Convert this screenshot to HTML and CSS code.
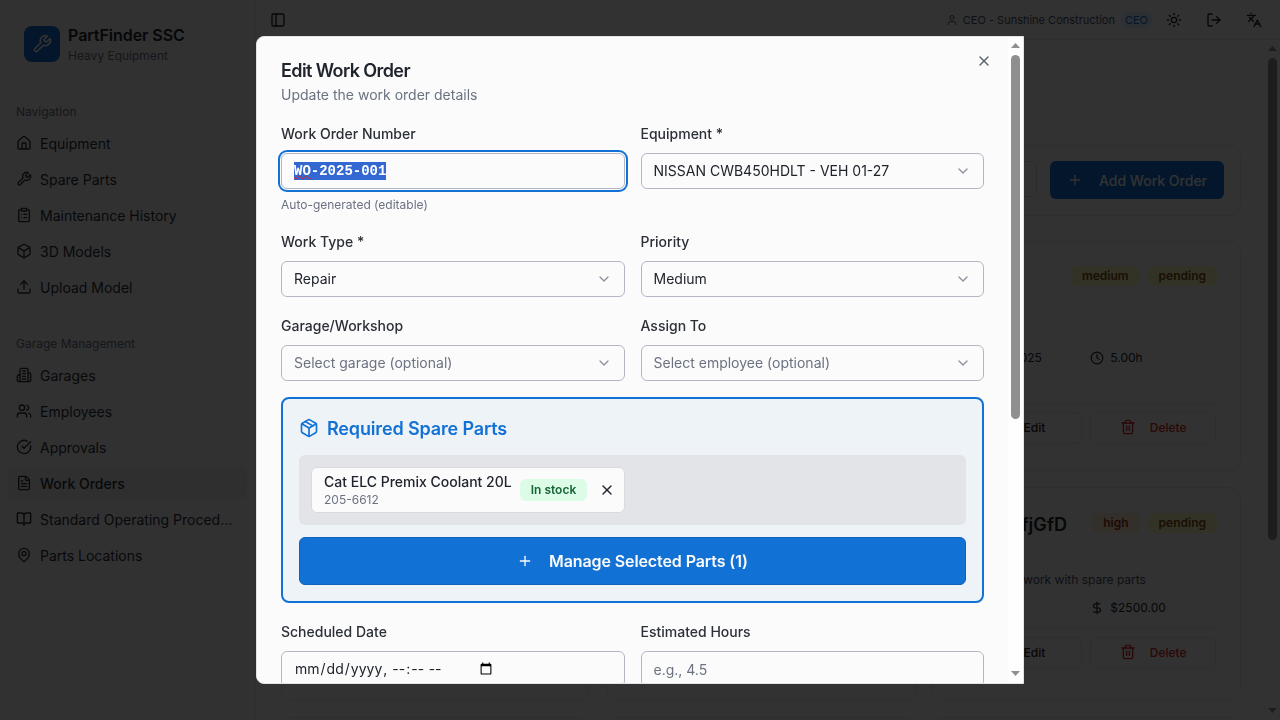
FILE: index.html
```html
<!DOCTYPE html>
<html lang="en">
<head>
<meta charset="utf-8">
<title>PartFinder SSC - Work Orders</title>
<link rel="stylesheet" href="styles.css">
</head>
<body>
<svg class="sprite" xmlns="http://www.w3.org/2000/svg">
  <symbol id="i-wrench" viewBox="0 0 24 24"><path d="M14.7 6.3a1 1 0 0 0 0 1.4l1.6 1.6a1 1 0 0 0 1.4 0l3.77-3.77a6 6 0 0 1-7.94 7.94l-6.91 6.91a2.12 2.12 0 0 1-3-3l6.91-6.91a6 6 0 0 1 7.94-7.94l-3.76 3.76z"/></symbol>
  <symbol id="i-house" viewBox="0 0 24 24"><path d="M15 21v-8a1 1 0 0 0-1-1h-4a1 1 0 0 0-1 1v8"/><path d="M3 10a2 2 0 0 1 .709-1.528l7-5.999a2 2 0 0 1 2.582 0l7 5.999A2 2 0 0 1 21 10v9a2 2 0 0 1-2 2H5a2 2 0 0 1-2-2z"/></symbol>
  <symbol id="i-clipboard" viewBox="0 0 24 24"><rect x="8" y="2" width="8" height="4" rx="1"/><path d="M16 4h2a2 2 0 0 1 2 2v14a2 2 0 0 1-2 2H6a2 2 0 0 1-2-2V6a2 2 0 0 1 2-2h2"/><path d="M12 11h4"/><path d="M12 16h4"/><path d="M8 11h.01"/><path d="M8 16h.01"/></symbol>
  <symbol id="i-box" viewBox="0 0 24 24"><path d="M21 8a2 2 0 0 0-1-1.73l-7-4a2 2 0 0 0-2 0l-7 4A2 2 0 0 0 3 8v8a2 2 0 0 0 1 1.73l7 4a2 2 0 0 0 2 0l7-4A2 2 0 0 0 21 16Z"/><path d="m3.3 7 8.7 5 8.7-5"/><path d="M12 22V12"/></symbol>
  <symbol id="i-package" viewBox="0 0 24 24"><path d="M11 21.73a2 2 0 0 0 2 0l7-4A2 2 0 0 0 21 16V8a2 2 0 0 0-1-1.73l-7-4a2 2 0 0 0-2 0l-7 4A2 2 0 0 0 3 8v8a2 2 0 0 0 1 1.73z"/><path d="M12 22V12"/><path d="M3.29 7 12 12l8.71-5"/><path d="m7.5 4.27 9 5.15"/></symbol>
  <symbol id="i-upload" viewBox="0 0 24 24"><path d="M21 15v4a2 2 0 0 1-2 2H5a2 2 0 0 1-2-2v-4"/><path d="m17 8-5-5-5 5"/><path d="M12 3v12"/></symbol>
  <symbol id="i-building" viewBox="0 0 24 24"><path d="M6 22V4a2 2 0 0 1 2-2h8a2 2 0 0 1 2 2v18Z"/><path d="M6 12H4a2 2 0 0 0-2 2v6a2 2 0 0 0 2 2h2"/><path d="M18 9h2a2 2 0 0 1 2 2v9a2 2 0 0 1-2 2h-2"/><path d="M10 6h4"/><path d="M10 10h4"/><path d="M10 14h4"/><path d="M10 18h4"/></symbol>
  <symbol id="i-users" viewBox="0 0 24 24"><path d="M16 21v-2a4 4 0 0 0-4-4H6a4 4 0 0 0-4 4v2"/><circle cx="9" cy="7" r="4"/><path d="M22 21v-2a4 4 0 0 0-3-3.87"/><path d="M16 3.13a4 4 0 0 1 0 7.75"/></symbol>
  <symbol id="i-check" viewBox="0 0 24 24"><path d="M21.801 10A10 10 0 1 1 17 3.335"/><path d="m9 11 3 3L22 4"/></symbol>
  <symbol id="i-file" viewBox="0 0 24 24"><path d="M15 2H6a2 2 0 0 0-2 2v16a2 2 0 0 0 2 2h12a2 2 0 0 0 2-2V7Z"/><path d="M14 2v4a2 2 0 0 0 2 2h4"/><path d="M10 9H8"/><path d="M16 13H8"/><path d="M16 17H8"/></symbol>
  <symbol id="i-book" viewBox="0 0 24 24"><path d="M12 7v14"/><path d="M3 18a1 1 0 0 1-1-1V4a1 1 0 0 1 1-1h5a4 4 0 0 1 4 4 4 4 0 0 1 4-4h5a1 1 0 0 1 1 1v13a1 1 0 0 1-1 1h-6a3 3 0 0 0-3 3 3 3 0 0 0-3-3z"/></symbol>
  <symbol id="i-pin" viewBox="0 0 24 24"><path d="M20 10c0 6-8 12-8 12s-8-6-8-12a8 8 0 0 1 16 0Z"/><circle cx="12" cy="10" r="3"/></symbol>
  <symbol id="i-panel" viewBox="0 0 24 24"><rect x="3" y="3" width="18" height="18" rx="2"/><path d="M9 3v18"/></symbol>
  <symbol id="i-user" viewBox="0 0 24 24"><path d="M19 21v-2a4 4 0 0 0-4-4H9a4 4 0 0 0-4 4v2"/><circle cx="12" cy="7" r="4"/></symbol>
  <symbol id="i-sun" viewBox="0 0 24 24"><circle cx="12" cy="12" r="4"/><path d="M12 2v2"/><path d="M12 20v2"/><path d="m4.93 4.93 1.41 1.41"/><path d="m17.66 17.66 1.41 1.41"/><path d="M2 12h2"/><path d="M20 12h2"/><path d="m6.34 17.66-1.41 1.41"/><path d="m19.07 4.93-1.41 1.41"/></symbol>
  <symbol id="i-logout" viewBox="0 0 24 24"><path d="M9 21H5a2 2 0 0 1-2-2V5a2 2 0 0 1 2-2h4"/><path d="m16 17 5-5-5-5"/><path d="M21 12H9"/></symbol>
  <symbol id="i-lang" viewBox="0 0 24 24"><path d="m5 8 6 6"/><path d="m4 14 6-6 2-3"/><path d="M2 5h12"/><path d="M7 2h1"/><path d="m22 22-5-10-5 10"/><path d="M14 18h6"/></symbol>
  <symbol id="i-x" viewBox="0 0 24 24"><path d="M18 6 6 18"/><path d="m6 6 12 12"/></symbol>
  <symbol id="i-plus" viewBox="0 0 24 24"><path d="M5 12h14"/><path d="M12 5v14"/></symbol>
  <symbol id="i-chevron" viewBox="0 0 24 24"><path d="m6 9 6 6 6-6"/></symbol>
  <symbol id="i-clock" viewBox="0 0 24 24"><circle cx="12" cy="12" r="10"/><path d="M12 6v6l4 2"/></symbol>
  <symbol id="i-dollar" viewBox="0 0 24 24"><path d="M12 2v20"/><path d="M17 5H9.5a3.5 3.5 0 0 0 0 7h5a3.5 3.5 0 0 1 0 7H6"/></symbol>
  <symbol id="i-trash" viewBox="0 0 24 24"><path d="M3 6h18"/><path d="M19 6v14c0 1-1 2-2 2H7c-1 0-2-1-2-2V6"/><path d="M8 6V4c0-1 1-2 2-2h4c1 0 2 1 2 2v2"/><path d="M10 11v6"/><path d="M14 11v6"/></symbol>
  <symbol id="i-pen" viewBox="0 0 24 24"><path d="M12 3H5a2 2 0 0 0-2 2v14a2 2 0 0 0 2 2h14a2 2 0 0 0 2-2v-7"/><path d="M18.4 2.6a2.1 2.1 0 0 1 3 3L12 15l-4 1 1-4z"/></symbol>
</svg>

<div class="app">
  <aside class="sidebar">
    <div class="brand">
      <div class="brand-mark"><svg class="icon icon-20"><use href="#i-wrench"/></svg></div>
      <div class="brand-text">
        <div class="brand-name">PartFinder SSC</div>
        <div class="brand-sub">Heavy Equipment</div>
      </div>
    </div>
    <div class="nav-group">
      <div class="nav-label">Navigation</div>
      <a class="nav-item"><svg class="icon"><use href="#i-house"/></svg><span>Equipment</span></a>
      <a class="nav-item"><svg class="icon"><use href="#i-wrench"/></svg><span>Spare Parts</span></a>
      <a class="nav-item"><svg class="icon"><use href="#i-clipboard"/></svg><span>Maintenance History</span></a>
      <a class="nav-item"><svg class="icon"><use href="#i-box"/></svg><span>3D Models</span></a>
      <a class="nav-item"><svg class="icon"><use href="#i-upload"/></svg><span>Upload Model</span></a>
    </div>
    <div class="nav-group">
      <div class="nav-label">Garage Management</div>
      <a class="nav-item"><svg class="icon"><use href="#i-building"/></svg><span>Garages</span></a>
      <a class="nav-item"><svg class="icon"><use href="#i-users"/></svg><span>Employees</span></a>
      <a class="nav-item"><svg class="icon"><use href="#i-check"/></svg><span>Approvals</span></a>
      <a class="nav-item active"><svg class="icon"><use href="#i-file"/></svg><span>Work Orders</span></a>
      <a class="nav-item"><svg class="icon"><use href="#i-book"/></svg><span class="truncate">Standard Operating Procedures</span></a>
      <a class="nav-item"><svg class="icon"><use href="#i-pin"/></svg><span>Parts Locations</span></a>
    </div>
  </aside>

  <div class="main">
    <header class="topbar">
      <svg class="icon"><use href="#i-panel"/></svg>
      <div class="topbar-right">
        <div class="who">
          <svg class="icon icon-12"><use href="#i-user"/></svg>
          <span>CEO - Sunshine Construction</span>
          <span class="role">CEO</span>
        </div>
        <div class="top-icons">
          <svg class="icon"><use href="#i-sun"/></svg>
          <svg class="icon"><use href="#i-logout"/></svg>
          <svg class="icon"><use href="#i-lang"/></svg>
        </div>
      </div>
    </header>
    <div class="main-body">
      <div class="content">
        <div class="toolbar">
          <button class="btn btn-outline"></button>
          <button class="btn btn-primary"><svg class="icon"><use href="#i-plus"/></svg>Add Work Order</button>
        </div>
        <div class="cards">
          <article class="card"></article>
          <article class="card"></article>
          <article class="card card-first">
            <div class="card-head"><div class="badges"><span class="badge amber">medium</span><span class="badge amber">pending</span></div></div>
            <div class="facts">
              <span class="fact"><svg class="icon icon-14"><use href="#i-clock"/></svg>10/25/2025</span>
              <span class="fact"><svg class="icon icon-14"><use href="#i-clock"/></svg>5.00h</span>
            </div>
            <div class="card-actions">
              <button class="btn-card"><svg class="icon"><use href="#i-pen"/></svg>Edit</button>
              <button class="btn-card danger"><svg class="icon"><use href="#i-trash"/></svg>Delete</button>
            </div>
          </article>
          <article class="card"></article>
          <article class="card"></article>
          <article class="card card-second">
            <div class="card-head"><h3 class="card-title">WO-AYfjGfD</h3><div class="badges"><span class="badge orange">high</span><span class="badge amber">pending</span></div></div>
            <p class="card-desc">Urgent test work with spare parts</p>
            <div class="facts">
              <span class="fact fact-right"><svg class="icon icon-14"><use href="#i-dollar"/></svg>$2500.00</span>
            </div>
            <div class="card-actions">
              <button class="btn-card"><svg class="icon"><use href="#i-pen"/></svg>Edit</button>
              <button class="btn-card danger"><svg class="icon"><use href="#i-trash"/></svg>Delete</button>
            </div>
          </article>
          <article class="card"></article>
          <article class="card"></article>
          <article class="card"></article>
        </div>
      </div>
      <div class="rail">
        <span class="arrow up"></span>
        <span class="thumb thumb-main"></span>
        <span class="arrow down"></span>
      </div>
    </div>
  </div>
</div>

<div class="overlay"></div>

<div class="dialog">
  <div class="dialog-body">
    <button class="dialog-close" aria-label="Close"><svg class="icon"><use href="#i-x"/></svg></button>
    <h2 class="dialog-title">Edit Work Order</h2>
    <p class="dialog-desc">Update the work order details</p>
    <form class="form">
      <div class="form-row">
        <div class="field">
          <label class="label">Work Order Number</label>
          <div class="input focused"><span class="selected"><span class="squiggle">WO</span>-2025-001</span></div>
          <p class="hint">Auto-generated (editable)</p>
        </div>
        <div class="field">
          <label class="label">Equipment *</label>
          <div class="select"><span>NISSAN CWB450HDLT - VEH 01-27</span><svg class="icon chev"><use href="#i-chevron"/></svg></div>
        </div>
      </div>
      <div class="form-row">
        <div class="field">
          <label class="label">Work Type *</label>
          <div class="select"><span>Repair</span><svg class="icon chev"><use href="#i-chevron"/></svg></div>
        </div>
        <div class="field">
          <label class="label">Priority</label>
          <div class="select"><span>Medium</span><svg class="icon chev"><use href="#i-chevron"/></svg></div>
        </div>
      </div>
      <div class="form-row">
        <div class="field">
          <label class="label">Garage/Workshop</label>
          <div class="select muted"><span>Select garage (optional)</span><svg class="icon chev"><use href="#i-chevron"/></svg></div>
        </div>
        <div class="field">
          <label class="label">Assign To</label>
          <div class="select muted"><span>Select employee (optional)</span><svg class="icon chev"><use href="#i-chevron"/></svg></div>
        </div>
      </div>
      <section class="parts">
        <h3 class="parts-title"><svg class="icon icon-20"><use href="#i-package"/></svg>Required Spare Parts</h3>
        <div class="parts-list">
          <div class="chip">
            <div class="chip-text">
              <div class="chip-name">Cat ELC Premix Coolant 20L</div>
              <div class="chip-code">205-6612</div>
            </div>
            <span class="stock">In stock</span>
            <svg class="icon chip-x"><use href="#i-x"/></svg>
          </div>
        </div>
        <button type="button" class="btn-manage"><svg class="icon"><use href="#i-plus"/></svg>Manage Selected Parts (1)</button>
      </section>
      <div class="form-row">
        <div class="field">
          <label class="label">Scheduled Date</label>
          <input class="input input-date" type="datetime-local">
        </div>
        <div class="field">
          <label class="label">Estimated Hours</label>
          <input class="input" type="text" placeholder="e.g., 4.5">
        </div>
      </div>
    </form>
  </div>
  <div class="rail rail-dialog">
    <span class="arrow up"></span>
    <span class="thumb thumb-dialog"></span>
    <span class="arrow down"></span>
  </div>
</div>
</body>
</html>
```
FILE: styles.css
```css
* { box-sizing: border-box; }
html, body { margin: 0; height: 100%; overflow: hidden; }
body {
  font-family: Inter, "Liberation Sans", sans-serif;
  font-size: 14px;
  color: #20242c;
  background: #fbfbfc;
}
h2, h3, p { margin: 0; }
button { font-family: inherit; }
.sprite { display: none; }

.icon {
  width: 16px; height: 16px; flex: none;
  fill: none; stroke: currentColor; stroke-width: 2;
  stroke-linecap: round; stroke-linejoin: round;
}
.icon-20 { width: 20px; height: 20px; }
.icon-14 { width: 14px; height: 14px; }
.icon-12 { width: 12px; height: 12px; }

.app { display: flex; height: 720px; }

/* Sidebar */
.sidebar {
  width: 256px; flex: none;
  background: #f4f4f5;
  border-right: 1px solid #e2e3e8;
  padding: 26px 8px 0;
  color: #2b3039;
}
.brand { display: flex; gap: 8px; padding: 0 16px; height: 36px; margin-bottom: 42px; }
.brand-mark {
  width: 36px; height: 36px; border-radius: 8px;
  background: #1271d4; color: #f7f7f8;
  display: flex; align-items: center; justify-content: center;
}
.brand-name { font-size: 16px; line-height: 20px; font-weight: 600; color: #20242c; margin-top: -1px; letter-spacing: -.05px; }
.brand-sub { font-size: 12px; line-height: 16px; color: #6b7280; margin-top: 3px; }
.nav-group { margin-bottom: 33px; }
.nav-label { font-size: 12px; line-height: 16px; color: #6b7280; padding: 0 8px; margin-bottom: 7px; height: 16px; }
.nav-item {
  display: flex; align-items: center; gap: 8px;
  height: 32px; padding: 0 8px; margin-bottom: 4px;
  border-radius: 6px; font-size: 14px;
}
.nav-item.active { background: #ececee; font-weight: 500; }
.truncate { overflow: hidden; white-space: nowrap; text-overflow: ellipsis; }

/* Main */
.main { flex: 1; min-width: 0; display: flex; flex-direction: column; }
.topbar {
  height: 40px; flex: none;
  display: flex; align-items: center; justify-content: space-between;
  padding: 0 18px 0 14px;
  border-bottom: 1px solid #e2e3e8;
}
.topbar-right { display: flex; align-items: center; gap: 14px; }
.who { display: flex; align-items: center; gap: 5px; font-size: 11px; color: #4b5260; }
.role { background: #dbeafe; color: #1271d4; padding: 1px 4px; border-radius: 6px; margin-left: 1px; }
.top-icons { display: flex; gap: 24px; }
.main-body { flex: 1; min-height: 0; display: flex; }
.content { flex: 1; min-width: 0; overflow: hidden; padding: 105px 24px 0 25px; }
.toolbar {
  height: 71px; margin-bottom: 25px; padding: 15px 16px;
  border: 1px solid #e2e3e8; border-radius: 12px;
  display: flex; justify-content: flex-end; align-items: flex-start; gap: 13px;
}
.btn {
  display: inline-flex; align-items: center; gap: 16px; height: 36px; padding: 0 16px;
  border-radius: 6px; font-size: 14px; font-weight: 500;
}
.btn-outline { background: #fbfbfc; border: 1px solid #d8dae0; color: #20242c; width: 100px; }
.btn-primary { background: #1271d4; color: #fbfbfc; border: 0; height: 38px; width: 174px; padding: 0 17px; }

.cards { display: grid; grid-template-columns: repeat(3, 1fr); gap: 16px; }
.card {
  border: 1px solid #e2e3e8; border-radius: 12px; padding: 24px;
  min-height: 214px; background: #fbfbfc;
}
.card-first { min-height: 230px; }
.card-first .facts { margin-top: 64px; }
.card-first .card-actions { margin-top: 37px; }
.card-second { padding-top: 25px; }
.card-head { display: flex; justify-content: space-between; align-items: flex-start; }
.card-first .card-head { justify-content: flex-end; }
.card-title { font-size: 18px; line-height: 24px; font-weight: 600; white-space: nowrap; letter-spacing: .1px; }
.badges { display: flex; gap: 8px; margin-right: -1px; }
.badge {
  font-size: 12px; line-height: 16px; font-weight: 600;
  padding: 1px 10px; border: 1px solid transparent; border-radius: 6px;
}
.badge.amber { background: #fef9c3; color: #854d0e; }
.badge.orange { background: #ffedd5; color: #9a3412; }
.card-desc { font-size: 12px; line-height: 16px; color: #4b5260; margin-top: 35px; }
.facts { display: grid; grid-template-columns: 1fr 1fr; gap: 8px; margin-top: 12px; font-size: 12px; line-height: 16px; }
.fact { display: flex; align-items: center; gap: 6px; }
.fact-right { grid-column: 2; }
.card-actions {
  display: grid; grid-template-columns: 1fr 1fr; gap: 8px;
  border-top: 1px solid #e2e3e8; margin-top: 12px; padding-top: 8px;
}
.btn-card {
  height: 32px; display: flex; align-items: center; justify-content: center; gap: 14px;
  padding: 0 0 2px;
  background: #fbfbfc; border: 1px solid #e2e3e8; border-radius: 6px;
  font-size: 12px; font-weight: 500; color: #20242c;
}
.btn-card.danger { color: #dc2626; }

/* Scrollbars drawn as elements */
.rail {
  width: 15px; flex: none; display: flex; flex-direction: column; align-items: center;
  padding: 6px 0 7px;
}
.rail-dialog { background: #fefefe; }
.arrow { width: 9px; height: 5px; background: #8f8f8f; flex: none; }
.arrow.up { clip-path: polygon(50% 0, 100% 100%, 0 100%); }
.arrow.down { clip-path: polygon(0 0, 100% 0, 50% 100%); margin-top: auto; }
.thumb { width: 9px; margin-top: 7px; background: #8f8f8f; border-radius: 5px; }
.thumb-main { height: 482px; }
.thumb-dialog { height: 364px; }

/* Overlay and dialog */
.overlay { position: fixed; inset: 0; background: rgba(0, 0, 0, .8); }
.dialog {
  position: fixed; left: 256px; top: 36px; width: 768px; height: 648px;
  display: flex;
  background: #fbfbfc; border: 1px solid #e2e3e8; border-radius: 8px 0 0 8px;
}
.dialog-body { flex: 1; min-width: 0; padding: 24px 24px 0; overflow: hidden; border-radius: 8px 0 0 8px; }
.dialog-close {
  position: absolute; right: 31px; top: 16px;
  width: 16px; height: 16px; padding: 0; border: 0; background: none; color: #5a606c;
}
.dialog-title { font-size: 18px; line-height: 19px; font-weight: 600; letter-spacing: -.6px; }
.dialog-desc { color: #6b7280; line-height: 20px; margin-top: 5px; }
.form { margin-top: 19px; display: flex; flex-direction: column; gap: 19px; }
.form-row { display: grid; grid-template-columns: 1fr 1fr; gap: 16px; }
.field { min-width: 0; }
.label { display: block; font-weight: 500; line-height: 20px; margin-bottom: 9px; color: #2b2f36; }
.input, .select {
  display: flex; align-items: center; width: 100%; height: 36px; padding: 0 12px;
  background: #fbfbfc; border: 1px solid #b4b6c4; border-radius: 6px;
  font-family: inherit; font-size: 14px; color: #20242c;
}
.select { padding-bottom: 2px; justify-content: space-between; }
.input-date { padding-bottom: 1px; }
.input::placeholder { color: #6b7280; }
.focused { box-shadow: 0 0 0 1px #fbfbfc, 0 0 0 3px #1271d4; }
.selected {
  font-family: "Liberation Mono", monospace; font-size: 14px; font-weight: 700; line-height: 18px;
  background: #3367d1; color: #fff;
}
.squiggle { text-decoration: underline wavy #e02020 1px; text-underline-offset: 0; }
.hint { font-size: 12px; line-height: 16px; color: #6b7280; margin-top: 8px; }
.select.muted { color: #6b7280; }
.chev { color: #8d919c; margin-top: 2px; }
.parts {
  margin-top: -3px; padding: 16px;
  height: 206px;
  background: #eef3f8; border: 2px solid #1271d4; border-radius: 8px;
}
.parts-title {
  display: flex; align-items: center; gap: 8px; height: 20px; margin-top: 3px; margin-bottom: 17px;
  font-size: 18px; font-weight: 600; color: #1271d4; letter-spacing: -.15px;
}
.parts-list {
  height: 70px; padding: 12px; margin-bottom: 12px;
  background: #e3e4e8; border-radius: 6px; display: flex; align-items: flex-start;
}
.chip {
  height: 46px; display: flex; align-items: center; gap: 8px;
  padding: 0 9px 0 12px;
  background: #fbfbfc; border: 1px solid #d9dae0; border-radius: 6px;
}
.chip-name { font-size: 14px; font-weight: 500; line-height: 18px; }
.chip-code { font-size: 12px; line-height: 16px; color: #6b7280; margin-top: 1px; }
.stock {
  font-size: 12px; line-height: 16px; font-weight: 600; color: #166534;
  background: #dcfce7; padding: 3px 11px; border-radius: 6px;
}
.chip-x { color: #20242c; margin-left: 4px; }
.btn-manage {
  width: 100%; height: 48px; display: flex; align-items: center; justify-content: center; gap: 16px;
  background: #1271d4; border: 1px solid #0f63bb; border-radius: 6px;
  color: #fbfbfc; font-size: 16px; font-weight: 600; letter-spacing: -.1px;
}
```
